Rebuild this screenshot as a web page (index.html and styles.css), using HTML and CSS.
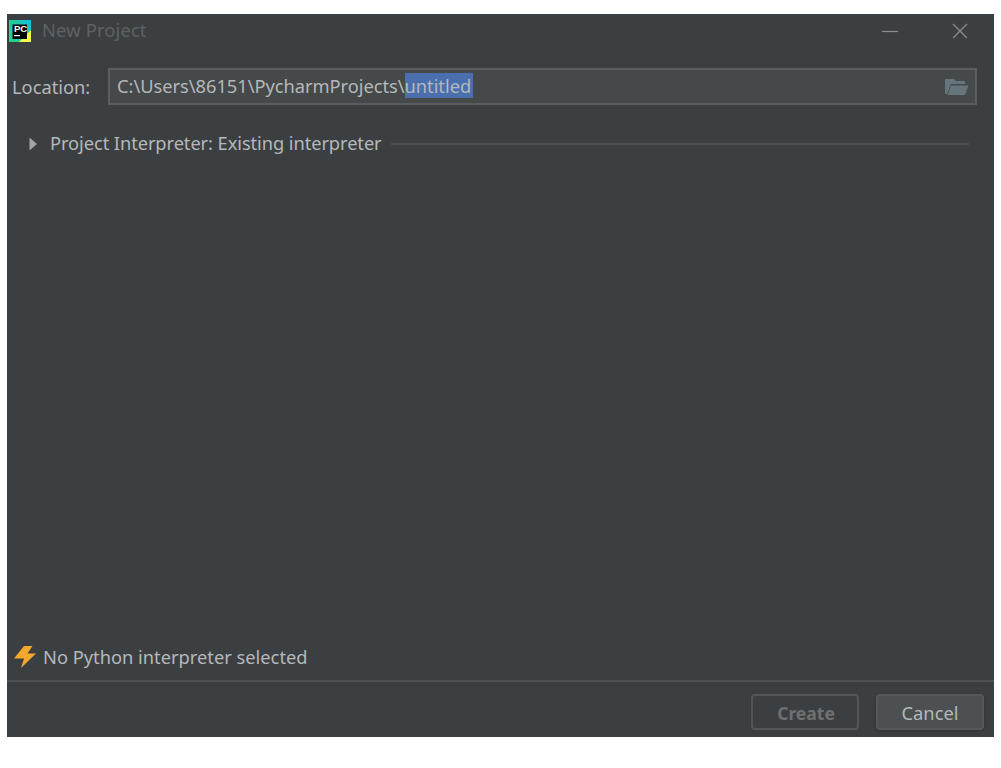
FILE: index.html
```html
<!DOCTYPE html>
<html lang="en">
<head>
<meta charset="utf-8">
<title>New Project</title>
<link rel="stylesheet" href="styles.css">
</head>
<body>
<main class="window">
  <header class="titlebar">
    <svg class="logo" width="22" height="22" viewBox="0 0 22 22" aria-hidden="true">
      <defs>
        <linearGradient id="pcA" x1="0" y1="1" x2="1" y2="0">
          <stop offset="0" stop-color="#21d789"/>
          <stop offset="0.6" stop-color="#21c8a0"/>
          <stop offset="1" stop-color="#07c3f2"/>
        </linearGradient>
      </defs>
      <rect width="22" height="22" fill="url(#pcA)"/>
      <path d="M22 10 L22 22 L10 22 Z" fill="#fcf84a"/>
      <rect x="3.500" y="4.500" width="14.500" height="14.500" fill="#000"/>
      <text x="5" y="11.800" class="logo-text">PC</text>
      <rect x="5" y="15" width="6" height="1.200" fill="#fff"/>
    </svg>
    <span class="title">New Project</span>
    <div class="window-controls">
      <svg width="16" height="16" viewBox="0 0 16 16" aria-hidden="true"><path d="M0 8.500 H16" stroke="#8c8c8c" stroke-width="1.200"/></svg>
      <svg width="16" height="16" viewBox="0 0 16 16" aria-hidden="true"><path d="M1 1 L15 15 M15 1 L1 15" stroke="#8c8c8c" stroke-width="1.300"/></svg>
    </div>
  </header>

  <div class="location-row">
    <label class="location-label">Location:</label>
    <div class="field">
      <span class="path">C:\Users\86151\PycharmProjects\<span class="selection">untitled</span></span>
      <svg class="folder" width="24" height="18" viewBox="0 0 24 18" aria-hidden="true">
        <path d="M0 1 H9 L11 3 H20 V6 H6 L2 16 H0 Z" fill="#66747b"/>
        <path d="M6 7.500 H23.500 L20 17 H2.500 Z" fill="#66747b"/>
      </svg>
    </div>
  </div>

  <div class="section">
    <svg class="chevron" width="9" height="14" viewBox="0 0 9 14" aria-hidden="true"><path d="M0.500 0.500 L8 7 L0.500 13.500 Z" fill="#a0a4a6"/></svg>
    <span class="section-title">Project Interpreter: Existing interpreter</span>
    <span class="rule"></span>
  </div>

  <div class="spacer"></div>

  <div class="status">
    <svg width="24" height="24" viewBox="0 0 24 24" aria-hidden="true"><path d="M11 1 H19.500 L14.500 8.500 H23 L8 23 L11 13.500 H1 Z" fill="#f4a82e"/></svg>
    <span>No Python interpreter selected</span>
  </div>

  <footer class="footer">
    <button class="btn btn-disabled" disabled>Create</button>
    <button class="btn btn-default">Cancel</button>
  </footer>
</main>
</body>
</html>
```

FILE: styles.css
```css
* { box-sizing: border-box; }
html, body { height: 100%; }
body {
  margin: 0;
  padding: 14px 7px 31px;
  background: #fff;
  font-family: "Noto Sans", "Open Sans", sans-serif;
  font-size: 18.300px;
  color: #b4b8ba;
}
.window {
  height: 723px;
  background: #3c3f41;
  display: flex;
  flex-direction: column;
}
.titlebar {
  height: 34px;
  display: flex;
  align-items: center;
  padding-left: 2px;
  flex: none;
}
.logo { flex: none; }
.logo-text {
  font-family: "Liberation Sans", sans-serif;
  font-size: 9.500px;
  font-weight: 700;
  fill: #fff;
}
.title {
  margin: 0 0 4px 11px;
  color: #5f6263;
  letter-spacing: 0.180px;
}
.window-controls {
  margin-left: auto;
  margin-right: 26px;
  display: flex;
  gap: 54px;
}
.location-row {
  margin-top: 20px;
  display: flex;
  align-items: center;
  padding: 0 18px 0 5px;
  flex: none;
}
.location-label { width: 96px; flex: none; }
.field {
  flex: 1;
  height: 37px;
  margin-right: -1px;
  background: #45494a;
  border: 2px solid #5b5e60;
  display: flex;
  align-items: center;
  padding: 0 6px 0 7px;
}
.path { line-height: 25px; white-space: nowrap; margin-bottom: 2px; letter-spacing: -0.030px; }
.selection { background: #4b6eaf; display: inline-block; padding-right: 2px; }
.folder { margin-left: auto; }
.section {
  margin-top: 25px;
  display: flex;
  align-items: center;
  padding: 0 25px 0 22px;
  flex: none;
}
.chevron { flex: none; margin-right: 12px; }
.section-title { white-space: nowrap; letter-spacing: -0.080px; margin-bottom: 2px; }
.rule {
  flex: 1;
  height: 2px;
  background: #4e5152;
  margin-left: 9px;
}
.spacer { flex: 1; }
.status {
  display: flex;
  align-items: center;
  gap: 6px;
  padding: 0 0 11px 6px;
  flex: none;
}
.footer {
  flex: none;
  height: 57px;
  border-top: 2px solid #4e5152;
  display: flex;
  justify-content: flex-end;
  gap: 17px;
  padding: 12px 10px 0 0;
}
.btn {
  width: 108px;
  height: 36px;
  border-radius: 4px;
  font: inherit;
  padding: 0;
}
.btn-disabled {
  background: transparent;
  border: 2px solid #535658;
  color: #6e7071;
  font-weight: 700;
  font-size: 17.500px;
  padding: 2px 0 0 2px;
}
.btn-default {
  background: #4c5052;
  border: 2px solid #55585a;
  color: #b4b8ba;
  box-shadow: 0 1px 3px rgba(0,0,0,.2);
}
```
